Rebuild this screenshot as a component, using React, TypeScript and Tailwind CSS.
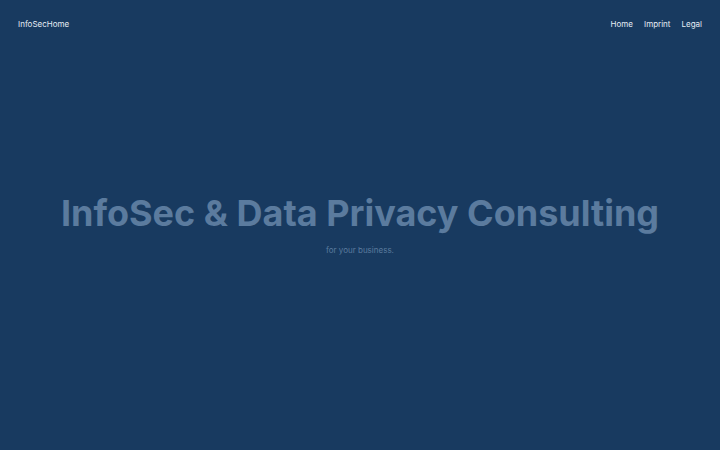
export default function App() {
  return (
    <div
      className="flex h-[450px] w-[720px] flex-col bg-[#183a60] text-white"
      style={{ fontFamily: "Inter, 'Noto Sans', sans-serif" }}
    >
      <header className="flex items-center justify-between px-[18px] pt-[18px]">
        <a className="text-[8px] leading-[12px] text-[#e6edf5]">InfoSecHome</a>
        <nav className="flex gap-[11px] text-[8px] leading-[12px] text-[#e6edf5]">
          <a>Home</a>
          <a>Imprint</a>
          <a>Legal</a>
        </nav>
      </header>
      <main className="flex flex-1 flex-col items-center justify-center pb-[30px]">
        <h1 className="text-[36px] font-bold leading-none text-[#5b7b9e]">
          InfoSec &amp; Data Privacy Consulting
        </h1>
        <p className="mt-[13px] text-[8px] text-[#5b7b9e]">for your business.</p>
      </main>
    </div>
  );
}
